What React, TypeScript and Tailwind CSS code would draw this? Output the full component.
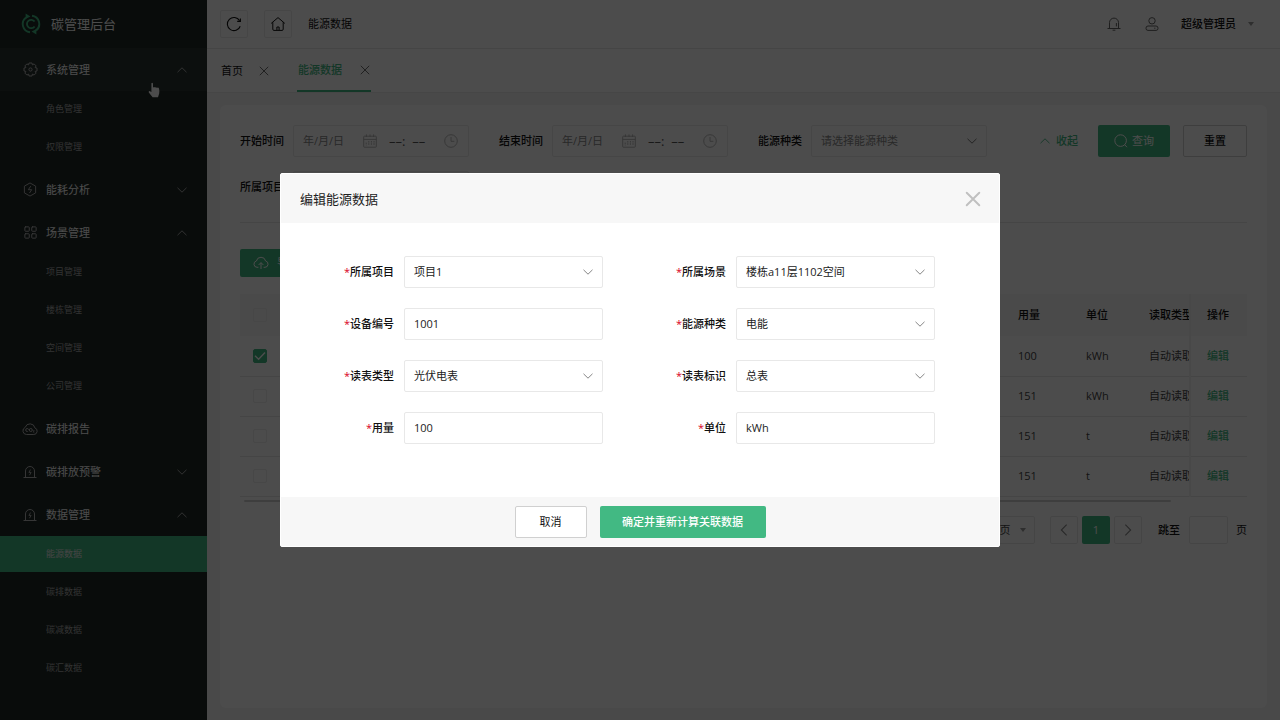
import { useState, type ReactNode } from 'react';
import { LayoutGrid } from 'lucide-react';

type IconProps = { className?: string };

// ---- icons ----

const ChevronDown = ({ className }: IconProps) => (
  <svg viewBox="0 0 10 6" fill="none" stroke="currentColor" strokeWidth="0.9" className={className}>
    <path d="M0.5 0.8 L5 5.2 L9.5 0.8" />
  </svg>
);

const ChevronUp = ({ className }: IconProps) => (
  <svg viewBox="0 0 10 6" fill="none" stroke="currentColor" strokeWidth="0.9" className={className}>
    <path d="M0.5 5.2 L5 0.8 L9.5 5.2" />
  </svg>
);

const Caret = ({ className }: IconProps) => (
  <svg viewBox="0 0 6 4" fill="currentColor" className={className}>
    <path d="M0 0 H6 L3 4 Z" />
  </svg>
);

const Cross = ({ className }: IconProps) => (
  <svg viewBox="0 0 14 14" fill="none" stroke="currentColor" strokeLinecap="round" className={className}>
    <path d="M1.5 1.5 L12.5 12.5 M12.5 1.5 L1.5 12.5" />
  </svg>
);

const Logo = () => (
  <svg viewBox="0 0 20 22" fill="none" stroke="#42b983" className="h-[22px] w-5">
    <path d="M5 4.4 A8.3 8.3 0 0 0 9 19.2" strokeWidth="1.9" />
    <path d="M11 2.8 A8.3 8.3 0 0 1 15 17.6" strokeWidth="1.9" />
    <path d="M4.6 0.6 L9.4 3.6 L4.6 6 Z" fill="#42b983" stroke="none" />
    <path d="M15.4 21.4 L10.6 18.4 L15.4 16 Z" fill="#42b983" stroke="none" />
    <path d="M13.6 8.6 A4.2 4.2 0 1 0 13.6 13.4" strokeWidth="1.8" />
  </svg>
);

const GearIcon = () => (
  <svg viewBox="0 0 15 15" fill="none" stroke="currentColor" strokeLinejoin="round" className="size-[15px] shrink-0">
    <path d="M5.6 2.9 L6 1 H9 L9.4 2.9 L11.1 1.9 L13.1 3.9 L12.1 5.6 L14 6 V9 L12.1 9.4 L13.1 11.1 L11.1 13.1 L9.4 12.1 L9 14 H6 L5.6 12.1 L3.9 13.1 L1.9 11.1 L2.9 9.4 L1 9 V6 L2.9 5.6 L1.9 3.9 L3.9 1.9 Z" />
    <circle cx="7.5" cy="7.5" r="1.6" />
  </svg>
);

const HexBoltIcon = () => (
  <svg viewBox="0 0 14 16" fill="none" stroke="currentColor" strokeLinejoin="round" className="h-[15px] w-[14px] shrink-0">
    <path d="M7 1 L13 4.4 V11.6 L7 15 L1 11.6 V4.4 Z" />
    <path d="M7.8 4.4 L5.2 8.2 H8.8 L6.4 11.8" />
  </svg>
);

const CloudIcon = () => (
  <svg viewBox="0 0 16 14" fill="none" stroke="currentColor" className="h-[14px] w-4 shrink-0">
    <path d="M4.4 12.5 H11.8 A3.4 3.4 0 0 0 12.9 5.9 A5 5 0 0 0 3.2 5.4 A3.7 3.7 0 0 0 4.4 12.5 Z" />
    <circle cx="5.2" cy="8" r="1.5" strokeDasharray="7 2.4" strokeDashoffset="-1.2" />
    <circle cx="8.8" cy="8" r="1.5" />
    <path d="M11.2 8.6 H12.2 L11.2 10.2 H12.4" strokeWidth="0.7" />
  </svg>
);

const AlarmIcon = () => (
  <svg viewBox="0 0 14 14" fill="none" stroke="currentColor" className="size-[14px] shrink-0">
    <path d="M2.5 12.5 V6 A4.5 4.5 0 0 1 11.5 6 V12.5" />
    <path d="M0.5 12.5 H13.5" />
    <path d="M7.5 4.6 L5.9 7.4 H8.1 L6.5 10.2" strokeWidth="0.9" />
  </svg>
);

const RefreshIcon = () => (
  <svg viewBox="0 0 16 16" fill="none" stroke="currentColor" strokeWidth="1.1" className="size-4">
    <path d="M13.6 4.6 A6.6 6.6 0 1 0 14.2 10.2" />
    <path d="M14.4 2.4 V5.4 H11.2" />
  </svg>
);

const HomeIcon = () => (
  <svg viewBox="0 0 16 16" fill="none" stroke="currentColor" strokeLinejoin="round" className="size-4">
    <path d="M1.2 7.4 L8 1.6 L14.8 7.4" />
    <path d="M2.8 6.2 V13.2 Q2.8 14.4 4 14.4 H12 Q13.2 14.4 13.2 13.2 V6.2" />
    <path d="M6.9 14.2 V11 H9.1 V14.2" />
  </svg>
);

const BellIcon = () => (
  <svg viewBox="0 0 14 14" fill="none" stroke="currentColor" className="size-[14px]">
    <path d="M2.5 11.5 V5.6 A4.5 4.5 0 0 1 11.5 5.6 V11.5" />
    <path d="M0.5 11.5 H13.5 M5.6 13.2 H8.4 M9.4 6 V9.4" />
  </svg>
);

const UserIcon = () => (
  <svg viewBox="0 0 14 14" fill="none" stroke="currentColor" className="size-[14px]">
    <circle cx="7" cy="3.8" r="3.2" />
    <rect x="1" y="9" width="12" height="4.4" rx="2" />
    <path d="M9.2 11.2 H10.4" />
  </svg>
);

const CalendarIcon = () => (
  <svg viewBox="0 0 14 14" fill="none" stroke="currentColor" strokeWidth="0.9" className="size-[14px] shrink-0">
    <rect x="0.7" y="2.2" width="12.6" height="11" rx="0.6" />
    <path d="M0.7 5.4 H13.3 M3.4 0.4 V3 M7 0.4 V3 M10.6 0.4 V3" />
    <path d="M3.2 8.6 V11.4 M5.8 7 V11.4 M8.4 7 V11.4 M11 7 V11.4" strokeDasharray="1.6 0.6" />
  </svg>
);

const ClockIcon = () => (
  <svg viewBox="0 0 14 14" fill="none" stroke="currentColor" strokeWidth="0.9" className="size-[14px] shrink-0">
    <circle cx="7" cy="7" r="6.3" />
    <path d="M7 3 V7.3 H10.4" />
  </svg>
);

const SearchIcon = () => (
  <svg viewBox="0 0 14 14" fill="none" stroke="currentColor" className="size-[14px]">
    <circle cx="6.6" cy="6.6" r="5.8" />
    <path d="M10.6 10.6 L13 13.2" />
  </svg>
);

const UploadIcon = () => (
  <svg viewBox="0 0 16 14" fill="none" stroke="currentColor" className="h-[14px] w-4">
    <path d="M5.4 11.3 H4 A3.2 3.2 0 0 1 3.4 5 A4.7 4.7 0 0 1 12.6 5 A3.2 3.2 0 0 1 12 11.3 H10.6" />
    <path d="M8 13 V6.8 M5.6 9 L8 6.6 L10.4 9" />
  </svg>
);

const HandCursor = ({ className }: IconProps) => (
  <svg viewBox="0 0 12 16" fill="currentColor" className={className}>
    <path d="M3.4 1.2 Q4.3 0.4 5 1.4 V5.6 Q6.2 4.4 7 5.6 Q8.2 4.6 8.9 5.9 Q10.4 5.1 11 6.6 Q11.8 10 11.2 11.6 L10 15.2 H4.6 L0.8 10.6 Q0.2 9.2 1.6 9 L3.4 10 Z" />
  </svg>
);

// ---- data ----

type MenuGroup = {
  label: string;
  icon: ReactNode;
  open?: boolean;
  children?: string[];
};

const MENU: MenuGroup[] = [
  { label: '系统管理', icon: <GearIcon />, open: true, children: ['角色管理', '权限管理'] },
  { label: '能耗分析', icon: <HexBoltIcon />, open: false },
  {
    label: '场景管理',
    icon: <LayoutGrid size={15} strokeWidth={1.6} />,
    open: true,
    children: ['项目管理', '楼栋管理', '空间管理', '公司管理'],
  },
  { label: '碳排报告', icon: <CloudIcon /> },
  { label: '碳排放预警', icon: <AlarmIcon />, open: false },
  {
    label: '数据管理',
    icon: <AlarmIcon />,
    open: true,
    children: ['能源数据', '碳排数据', '碳减数据', '碳汇数据'],
  },
];

const ROWS = [
  { id: 1, amount: '100', unit: 'kWh', mode: '自动读取', checked: true },
  { id: 2, amount: '151', unit: 'kWh', mode: '自动读取', checked: false },
  { id: 3, amount: '151', unit: 't', mode: '自动读取', checked: false },
  { id: 4, amount: '151', unit: 't', mode: '自动读取', checked: false },
];

const FORM_FIELDS = [
  { id: 'project', label: '所属项目', value: '项目1', select: true },
  { id: 'scene', label: '所属场景', value: '楼栋a11层1102空间', select: true },
  { id: 'device', label: '设备编号', value: '1001', select: false },
  { id: 'energy', label: '能源种类', value: '电能', select: true },
  { id: 'meter', label: '读表类型', value: '光伏电表', select: true },
  { id: 'mark', label: '读表标识', value: '总表', select: true },
  { id: 'amount', label: '用量', value: '100', select: false },
  { id: 'unit', label: '单位', value: 'kWh', select: false },
];

// ---- page ----

function Sidebar() {
  return (
    <aside className="relative w-[207px] shrink-0 bg-[#1e2825] text-white">
      <div className="flex h-12 items-center gap-2.5 pl-[21px] text-[13px]">
        <Logo />
        <span>碳管理后台</span>
      </div>
      <nav>
        {MENU.map((group, i) => (
          <div key={group.label}>
            <button className={`flex h-[43px] w-full items-center pr-5 pl-[22px] ${i === 0 ? 'bg-[#28322f]' : ''}`}>
              <span className="flex w-4 justify-center text-[#b5b5b5]">{group.icon}</span>
              <span className="ml-2">{group.label}</span>
              {group.open === true && <ChevronUp className="ml-auto h-1.5 w-2.5 text-[#b5b5b5]" />}
              {group.open === false && <ChevronDown className="ml-auto h-1.5 w-2.5 text-[#b5b5b5]" />}
            </button>
            {group.children && (
              <ul className="flex flex-col gap-0.5 pb-[3px] text-[9px]">
                {group.children.map((item) => (
                  <li key={item}>
                    <a
                      href="#"
                      className={`flex h-9 items-center pl-[46px] ${
                        item === '能源数据' ? 'bg-[#42b983] text-[#e5e5e5]' : 'text-[#a8a8a8]'
                      }`}
                    >
                      {item}
                    </a>
                  </li>
                ))}
              </ul>
            )}
          </div>
        ))}
      </nav>
      <HandCursor className="absolute top-[82px] left-[148px] h-4 w-3" />
    </aside>
  );
}

function TopBar() {
  return (
    <header className="flex h-[49px] items-center border-b border-[#e6e6e6] bg-white pr-[26px] pl-[13px]">
      <button aria-label="刷新" className="flex size-7 items-center justify-center rounded-xs border border-[#ebebeb]">
        <RefreshIcon />
      </button>
      <button aria-label="主页" className="ml-4 flex size-7 items-center justify-center rounded-xs border border-[#ebebeb]">
        <HomeIcon />
      </button>
      <span className="ml-4">能源数据</span>
      <div className="ml-auto flex items-center">
        <button aria-label="通知" className="text-[#666]">
          <BellIcon />
        </button>
        <button aria-label="用户" className="ml-6 text-[#666]">
          <UserIcon />
        </button>
        <button className="ml-[22px] flex items-center gap-3 font-medium">
          超级管理员
          <Caret className="h-1 w-1.5 text-[#999]" />
        </button>
      </div>
    </header>
  );
}

function Tabs() {
  return (
    <div className="flex h-11 items-stretch border-b border-[#ececec] bg-white pl-[14px]">
      <div className="flex items-center gap-4">
        <a href="#">首页</a>
        <button aria-label="关闭首页" className="text-[#555]">
          <Cross className="size-2.5 stroke-[1.2]" />
        </button>
      </div>
      <div className="ml-7 flex items-center gap-[18px] border-b-2 border-[#42b983] px-px">
        <a href="#" className="font-medium text-[#42b983]">
          能源数据
        </a>
        <button aria-label="关闭能源数据" className="text-[#555]">
          <Cross className="size-2.5 stroke-[1.2]" />
        </button>
      </div>
    </div>
  );
}

function DateTimeField({ id, label }: { id: string; label: string }) {
  return (
    <div className="flex items-center gap-[9px]">
      <label htmlFor={id} className="w-11 font-medium">
        {label}
      </label>
      <div className="flex h-8 w-[176px] items-center rounded-xs border border-[#ebebeb] px-[9px] text-[#b0b0b0]">
        <input id={id} placeholder="年/月/日" className="w-[60px] placeholder:text-[#888]" />
        <CalendarIcon />
        <input aria-label={`${label} 时分`} placeholder="––:  ––" className="ml-3 w-[55px] text-[13px] placeholder:text-[#555]" />
        <ClockIcon />
      </div>
    </div>
  );
}

function SelectField({ id, label, placeholder }: { id: string; label: string; placeholder: string }) {
  return (
    <div className="flex items-center gap-[9px]">
      <label htmlFor={id} className="w-11 font-medium">
        {label}
      </label>
      <div className="relative">
        <select id={id} className="block h-8 w-[176px] appearance-none rounded-xs border border-[#ebebeb] px-[9px] text-[#888]">
          <option>{placeholder}</option>
        </select>
        <ChevronDown className="pointer-events-none absolute top-[13px] right-2.5 h-1.5 w-2.5 text-[#666]" />
      </div>
    </div>
  );
}

function Filters() {
  return (
    <form className="border-b border-[#e8e8e8] pb-[19px]">
      <div className="flex items-center gap-[30px]">
        <DateTimeField id="start" label="开始时间" />
        <DateTimeField id="end" label="结束时间" />
        <SelectField id="kind" label="能源种类" placeholder="请选择能源种类" />
        <div className="ml-auto flex items-center">
          <button type="button" className="flex items-center gap-1.5 font-medium text-[#42b983]">
            <ChevronUp className="h-1.5 w-2.5" />
            收起
          </button>
          <button
            type="button"
            className="ml-5 flex h-8 w-[72px] items-center justify-center gap-1 rounded-xs bg-[#42b983] text-white"
          >
            <SearchIcon />
            查询
          </button>
          <button type="reset" className="ml-[13px] h-8 w-16 rounded-xs border border-[#cfcfcf] font-medium">
            重置
          </button>
        </div>
      </div>
      <div className="mt-[14px] flex items-center gap-[30px]">
        <SelectField id="filter-project" label="所属项目" placeholder="请选择所属项目" />
      </div>
    </form>
  );
}

function CheckBox({ label, defaultChecked }: { label: string; defaultChecked?: boolean }) {
  return (
    <span className="relative block size-[14px]">
      <input
        type="checkbox"
        aria-label={label}
        defaultChecked={defaultChecked}
        className="peer block size-[14px] appearance-none rounded-xs border border-[#ededed] checked:border-[#42b983] checked:bg-[#42b983]"
      />
      <svg
        viewBox="0 0 14 14"
        fill="none"
        stroke="#fff"
        strokeWidth="1.4"
        className="pointer-events-none absolute inset-0 hidden peer-checked:block"
      >
        <path d="M2 6.8 L5.6 10.2 L12 3.6" />
      </svg>
    </span>
  );
}

function DataTable() {
  return (
    <div>
      <table className="w-full table-fixed text-left">
        <thead>
          <tr className="h-[42px] bg-[#f7f7f7]">
            <th className="w-10 pl-[13px]">
              <CheckBox label="全选" />
            </th>
            <th />
            <th className="w-[68px] font-medium">用量</th>
            <th className="w-[63px] font-medium">单位</th>
            <th className="w-[41px] overflow-hidden font-medium whitespace-nowrap">读取类型</th>
            <th className="w-[57px] border-l-2 border-[#f0f0f0] pl-4 font-medium">操作</th>
          </tr>
        </thead>
        <tbody>
          {ROWS.map((row) => (
            <tr key={row.id} className="h-10 border-b border-[#e8e8e8] text-[#444]">
              <td className="pl-[13px]">
                <CheckBox label={`选择第${row.id}行`} defaultChecked={row.checked} />
              </td>
              <td />
              <td>{row.amount}</td>
              <td>{row.unit}</td>
              <td className="overflow-hidden whitespace-nowrap">{row.mode}</td>
              <td className="border-l-2 border-l-[#f0f0f0] pl-4">
                <a href="#" className="font-medium text-[#42b983]">
                  编辑
                </a>
              </td>
            </tr>
          ))}
        </tbody>
      </table>
      <div className="mt-[3px] mr-[76px] ml-1 h-0.5 rounded-full bg-[#d0d0d0]" />
    </div>
  );
}

function Pagination() {
  return (
    <div className="mt-[14px] flex items-center justify-end">
      <div className="relative">
        <select aria-label="每页条数" className="block h-7 w-20 appearance-none rounded-xs border border-[#e8e8e8] pl-4 text-[#444]">
          <option>10条/页</option>
        </select>
        <Caret className="pointer-events-none absolute top-3 right-[9px] h-1 w-1.5 text-[#999]" />
      </div>
      <div className="ml-[15px] flex gap-1">
        <button aria-label="上一页" className="flex size-7 items-center justify-center rounded-xs border border-[#e8e8e8] text-[#888]">
          <ChevronDown className="h-2 w-3 shrink-0 rotate-90" />
        </button>
        <button className="size-7 rounded-xs bg-[#42b983] font-medium text-white">1</button>
        <button aria-label="下一页" className="flex size-7 items-center justify-center rounded-xs border border-[#e8e8e8] text-[#888]">
          <ChevronDown className="h-2 w-3 shrink-0 -rotate-90" />
        </button>
      </div>
      <label htmlFor="jump" className="ml-4 font-medium">
        跳至
      </label>
      <input id="jump" className="mr-2 ml-[9px] h-7 w-[39px] rounded-xs border border-[#e8e8e8] text-center" />
      <span>页</span>
    </div>
  );
}

function EditDialog({ onClose }: { onClose: () => void }) {
  return (
    <div className="fixed inset-0 z-10 flex items-center justify-center bg-black/70">
      <div role="dialog" aria-labelledby="dialog-title" className="w-[720px] overflow-hidden rounded-xs border border-white bg-white">
        <div className="flex h-[49px] items-center justify-between bg-[#f7f7f7] pr-[18px] pl-[19px]">
          <h2 id="dialog-title" className="text-[13px] text-[#222]">
            编辑能源数据
          </h2>
          <button aria-label="关闭" onClick={onClose} className="text-[#c0c0c0]">
            <Cross className="size-4 stroke-[1.7]" />
          </button>
        </div>
        <div className="grid grid-cols-[auto_auto] justify-start gap-x-[69px] gap-y-5 pt-[33px] pb-[53px] pl-[59px]">
          {FORM_FIELDS.map((field) => (
            <div key={field.id} className="flex items-center gap-2.5">
              <label htmlFor={field.id} className="w-[54px] text-right font-medium whitespace-nowrap">
                <span className="text-[#d9001b]">*</span>
                {field.label}
              </label>
              {field.select ? (
                <div className="relative">
                  <select id={field.id} className="block h-8 w-[199px] appearance-none rounded-xs border border-[#e8e8e8] px-[9px] text-[#222]">
                    <option>{field.value}</option>
                  </select>
                  <ChevronDown className="pointer-events-none absolute top-[13px] right-2.5 h-1.5 w-2.5 text-[#777]" />
                </div>
              ) : (
                <input
                  id={field.id}
                  defaultValue={field.value}
                  className="block h-8 w-[199px] rounded-xs border border-[#e8e8e8] px-[9px] pb-0.5 text-[#222]"
                />
              )}
            </div>
          ))}
        </div>
        <div className="flex h-[49px] items-center justify-center gap-[13px] bg-[#f7f7f7]">
          <button onClick={onClose} className="h-8 w-[72px] rounded-xs border border-[#d0d0d0] bg-white">
            取消
          </button>
          <button onClick={onClose} className="h-8 w-[166px] rounded-xs bg-[#42b983] font-medium text-white">
            确定并重新计算关联数据
          </button>
        </div>
      </div>
    </div>
  );
}

export default function App() {
  const [editing, setEditing] = useState(true);

  return (
    <div className="flex min-h-screen bg-[#f5f5f5] font-['Open_Sans','Noto_Sans_CJK_SC',sans-serif] text-[11px] leading-4 text-[#111]">
      <Sidebar />
      <div className="flex min-w-0 flex-1 flex-col">
        <TopBar />
        <Tabs />
        <main className="mx-[13px] my-3 flex-1 rounded-md bg-white p-5">
          <Filters />
          <button className="mt-[26px] mb-[17px] flex h-7 items-center gap-2 rounded-xs bg-[#42b983] px-[13px] text-white">
            <UploadIcon />
            导入
          </button>
          <DataTable />
          <Pagination />
        </main>
      </div>
      {editing && <EditDialog onClose={() => setEditing(false)} />}
    </div>
  );
}
